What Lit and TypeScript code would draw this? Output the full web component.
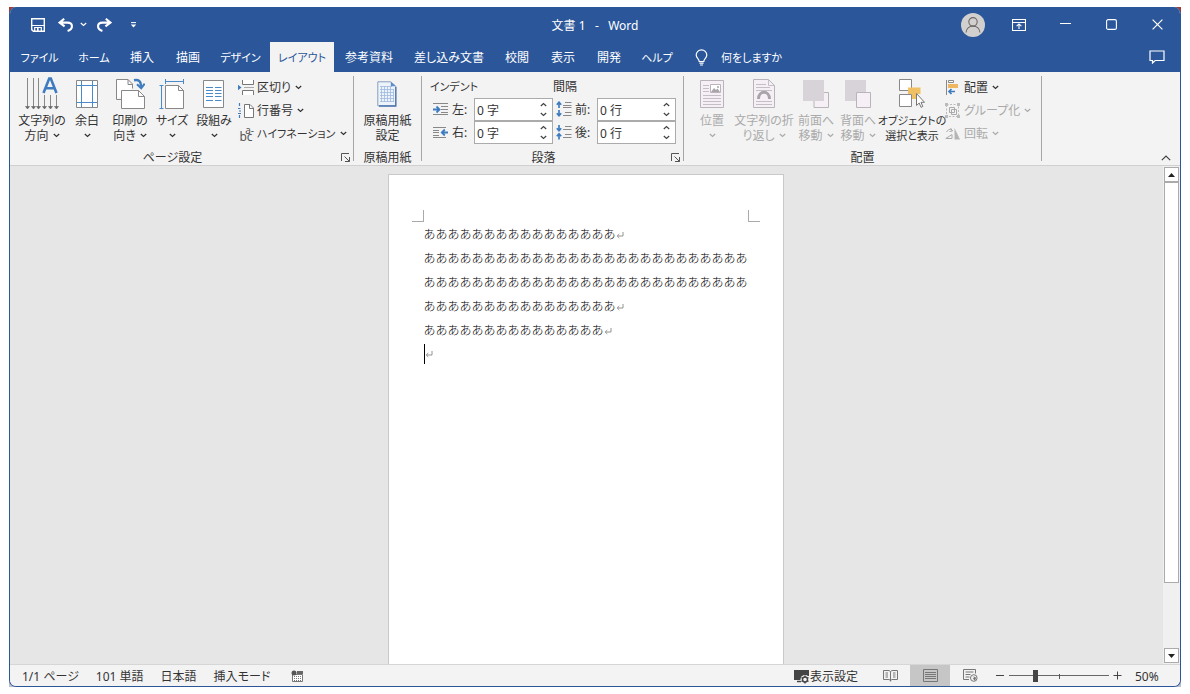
import { LitElement, html, css, svg, nothing, TemplateResult } from "lit";
import { customElement, property } from "lit/decorators.js";
import { classMap } from "lit/directives/class-map.js";

type Icon = TemplateResult;

const icon = (w: number, h: number, body: unknown): Icon =>
  html`<svg width=${w} height=${h} viewBox="0 0 ${w} ${h}" fill="none" aria-hidden="true">${body}</svg>`;

const chevron = () => html`<svg width="7" height="5" viewBox="0 0 7 5" fill="none" aria-hidden="true">
  <path d="M.8 1l2.700 2.500L6.200 1" stroke="currentColor" stroke-width="1.200" />
</svg>`;

const icons = {
  save: icon(14, 14, svg`<path d="M.7.7h12.6v12.6H2.4L.7 11.6z" stroke="#fff" stroke-width="1.4"/><path d="M1 7.500h12M3.700 13V9.500h6.600V13" stroke="#fff" stroke-width="1.200"/><path d="M6 10h1.600v3H6z" fill="#fff"/>`),
  undo: icon(16, 14, svg`<path d="M6.2.8L1.6 4.6l5 3.8M2 4.6h7.4c6 0 6 6.500.2 8.300" stroke="#fff" stroke-width="2.100"/>`),
  redo: icon(16, 14, svg`<path d="M9.800.8l4.600 3.800-5 3.800M14 4.600H6.600c-6 0-6 6.500-.2 8.300" stroke="#fff" stroke-width="2.100"/>`),
  customize: icon(7, 6, svg`<path d="M1 .6h5" stroke="#fff"/><path d="M.8 2.500h5.400L3.500 5.500z" fill="#fff"/>`),
  avatar: icon(24, 24, svg`<circle cx="12" cy="12" r="12" fill="#d2d0ce"/><circle cx="12" cy="8.800" r="4.200" stroke="#6a6866" stroke-width="1.100"/><path d="M5 19.500c.8-8.500 13.200-8.500 14 0" stroke="#6a6866" stroke-width="1.100"/>`),
  ribbonMode: icon(14, 12, svg`<path d="M.5.5h13v11H.5zM.5 3.500h13" stroke="#fff" stroke-width="1.100"/><path d="M7 10V5M4.600 7.200L7 4.900l2.400 2.300" stroke="#fff" stroke-width="1.100"/>`),
  minimize: icon(11, 11, svg`<path d="M0 4.500h11" stroke="#fff"/>`),
  maximize: icon(11, 11, svg`<rect x=".6" y=".6" width="9.800" height="9.800" rx="1.500" stroke="#fff" stroke-width="1.100"/>`),
  close: icon(11, 11, svg`<path d="M.6.6l9.800 9.800M10.400.6L.6 10.400" stroke="#fff" stroke-width="1.200"/>`),
  bulb: icon(13, 17, svg`<path d="M4.200 12.500c0-2.500-3-3.200-3-6.400a5.300 5.300 0 0 1 10.600 0c0 3.200-3 3.900-3 6.400zM4.400 14.200h4.200M5 16h3" stroke="#fff" stroke-width="1.200"/>`),
  comment: icon(16, 14, svg`<path d="M1 1h14v9.500H6.200L3.500 13v-2.500H1z" stroke="#fff" stroke-width="1.200"/>`),
  textDirection: icon(34, 34, svg`<path d="M2.500 1v30M8.500 1v30M13.500 1v30M19.500 18v13M25.500 18v13M31.500 18v13" stroke="#888"/><path d="M.5 29.500h4L2.500 32zM6.500 29.500h4l-2 2.500zM11.500 29.500h4l-2 2.500zM17.500 29.500h4l-2 2.500zM23.500 29.500h4l-2 2.500zM29.500 29.500h4l-2 2.500z" fill="#666" stroke="#666" stroke-width=".6"/><path d="M18.500 16L24.200 1.500h1.600L31.500 16M20.700 11.200h8.700" stroke="#3f7cbf" stroke-width="2.600"/>`),
  margins: icon(22, 28, svg`<path d="M.5.5h21v27H.5z" fill="#fff" stroke="#888"/><path d="M5.500 1v26M16.500 1v26M1 5.500h20M1 22.500h20" stroke="#4a8ac8"/>`),
  orientation: icon(30, 32, svg`<path d="M1.500 21.500v-20H13l4.500 4.500v4.500M13 1.500v5h4.500M1.500 21.500H6" fill="#fff" stroke="#888"/><path d="M6.500 12.500h17l6 6v12h-23z" fill="#fff" stroke="#888"/><path d="M23.500 12.500v6h6" stroke="#888"/><path d="M19 2.300c5-1 7 1 7 6.500" stroke="#3f7cbf" stroke-width="2.400"/><path d="M22 6.200l4.200 4 3.500-4.500" stroke="#3f7cbf" stroke-width="2"/>`),
  size: icon(26, 30, svg`<path d="M6.500 6.500h13l5 5v18h-18z" fill="#fff" stroke="#888"/><path d="M19.500 6.500v5h5" stroke="#888"/><path d="M6 2.500h19M6.500 0v5M24.500 0v5M2.500 6.500v23M.5 6.500h4M.5 29.500h4" stroke="#4a8ac8"/>`),
  columns: icon(22, 28, svg`<path d="M.5.5h20v27H.5z" fill="#fff" stroke="#888"/><path d="M3 7.500h7M3 10.500h7M3 13.500h7M3 16.500h7M3 20.500h7M12 7.500h6.500M12 10.500h6.500M12 13.500h6.500M12 16.500h6.500M12 20.500h6.500" stroke="#4a8ac8"/>`),
  breaks: icon(17, 15, svg`<path d="M4.500 0v4.500h11V0M4.500 15v-4.500h11V15" fill="#fff" stroke="#777"/><path d="M6 7.500h10" stroke="#aaa"/><path d="M0 4.700l3.500 2.800L0 10.200z" fill="#3f7cbf"/>`),
  lineNumbers: icon(17, 15, svg`<path d="M6.500 1.500H12l3.500 3.500v9.500h-9z" fill="#fff" stroke="#777"/><path d="M11.500 1.500v4h4" stroke="#777"/><path d="M1.500 0v3M0 5.500h2.500M1 8h2M0 10.500h3M1.500 12v3" stroke="#3f7cbf" stroke-width="1.200"/>`),
  manuscript: icon(20, 26, svg`<path d="M.8.8h13l5 4.500v19.500H.8z" fill="#edf3fb" stroke="#8a9dbb"/><path d="M3 5.500h12M3 8.500h14M3 11.500h14M3 14.500h14M3 17.500h14M3 20.500h14M4.500 5v16M7.500 5v16M10.500 5v16M13.500 5v16M16.500 8v13" stroke="#9db9df" stroke-width=".8"/><path d="M13.800.8v4.500h5z" fill="#5f8bcb"/><path d="M18.800 6v19H2" stroke="#4b74ae" stroke-width="1.300"/>`),
  launcher: icon(9, 9, svg`<path d="M.5 8V.5H8M8.500 4v4.500H4M3.500 3.500l5 5" stroke="#555"/>`),
  indentLeft: icon(15, 13, svg`<path d="M0 .5h15M0 11.500h15M8 3.500h7M8 6.500h7M8 9.500h7" stroke="#888"/><path d="M0 6.500h6M3.500 3.500l3 3-3 3" stroke="#3f7cbf" stroke-width="1.800"/>`),
  indentRight: icon(15, 13, svg`<path d="M0 1.500h13M0 11.500h13M0 4.500h6M0 6.500h6M0 9.500h6" stroke="#888"/><path d="M9 6.500h6M11.800 3.500l-3 3 3 3" stroke="#3f7cbf" stroke-width="1.800"/>`),
  spaceBefore: icon(16, 17, svg`<path d="M9 1.500h6.500M7 4.500h8.500M7 6.500h8.500M9 11.500h6.500M7 14.500h8.500" stroke="#888"/><path d="M3 1.500v5.500M.8 3.700L3 1.200l2.200 2.500M3 9v5.500M.8 12.300L3 14.800l2.200-2.500" stroke="#3f7cbf" stroke-width="1.700"/>`),
  spaceAfter: icon(16, 17, svg`<path d="M9 2.500h6.500M7 5.500h8.500M9 10.500h6.500M7 13.500h8.500" stroke="#888"/><path d="M3 1v5.500M.8 4.300L3 6.800l2.200-2.500M3 10v5.500M.8 12.200L3 9.700l2.200 2.500" stroke="#3f7cbf" stroke-width="1.700"/>`),
  position: icon(24, 28, svg`<path d="M.5.5h23v27H.5z" fill="#f6f0f6" stroke="#b9b4b9"/><path d="M3 5.500h6M3 8.500h6M3 11.500h6M3 15.500h18M3 18.500h18M3 21.500h18M3 24.500h18" stroke="#c4bfc4"/><path d="M10.500 4.500h10v8h-10z" fill="#fff" stroke="#b9b4b9"/><path d="M11 12l3-4 2 2 1.500-1.500L20 12z" fill="#a9a4a9"/><circle cx="18" cy="7" r="1" fill="#a9a4a9"/>`),
  wrap: icon(22, 30, svg`<path d="M.5.5h15l6 6v22H.5z" fill="#f6f0f6" stroke="#b9b4b9"/><path d="M15.500.5v6h6M3 5.500h10M3 8.500h14M3 11.500h16M3 22.500h16M3 25.500h16" stroke="#c4bfc4"/><path d="M5.500 20c0-9 11-9 11 0" stroke="#a9a4a9" stroke-width="3"/>`),
  forward: icon(26, 28, svg`<path d="M11 12.500h14.500v15H11z" fill="#f6f0f6" stroke="#b9b4b9"/><path d="M0 0h21v21H0z" fill="#d8d3d8"/>`),
  backward: icon(26, 28, svg`<path d="M0 0h21v21H0z" fill="#d8d3d8"/><path d="M11.500 12.500h14v15h-14z" fill="#f6f0f6" stroke="#b9b4b9"/>`),
  selection: icon(26, 30, svg`<path d="M.5.500h12v11H.5zM.5 15.500h12v12H.5z" fill="#fff" stroke="#888"/><path d="M9 8.500h12.500v6.500H9z" fill="#f0c065"/><path d="M13 14h5v6h-5z" fill="#f0c065"/><path d="M17.500 14.500v12l2.700-2.500 1.800 4.300 1.800-.8-1.800-4.200h3.500z" fill="#fff" stroke="#777"/>`),
  align: icon(14, 15, svg`<path d="M1.500 0v15" stroke="#888"/><path d="M3.500.5h5v2h-5z" fill="#fff" stroke="#888"/><path d="M3 4h10v4H3z" fill="#f0b763"/><path d="M4 11.500h6M6.500 9L4 11.500 6.500 14" stroke="#3f7cbf" stroke-width="1.700"/>`),
  group: icon(15, 15, svg`<path d="M1.500 1.500h12v12h-12z" stroke="#bbb" stroke-dasharray="2 1.500"/><path d="M4.500 4.500h5v5h-5zM6.500 6.500h5v5h-5z" stroke="#aaa"/><path d="M0 0h3v3H0zM12 0h3v3h-3zM0 12h3v3H0zM12 12h3v3h-3z" fill="#bbb"/>`),
  rotate: icon(16, 13, svg`<path d="M.8 11.500L7 7.500v4zM1.500 5c2-3.500 5-3 6-1M5.500 1l2 3-3 .5" stroke="#aaa"/><path d="M9.500 1v11.500H15z" fill="#b5b5b5"/>`),
  collapse: icon(10, 6, svg`<path d="M.8 5.200L5 1l4.200 4.200" stroke="#444" stroke-width="1.200"/>`),
  macro: icon(13, 13, svg`<path d="M1.500 4.500h10v7h-10z" fill="#fff" stroke="#777"/><path d="M6 1h6v3H6z" fill="#666"/><path d="M3 6.500h8M3 8.500h8M3 10.500h8" stroke="#777" stroke-dasharray="1 1"/><circle cx="3" cy="3" r="2.500" fill="#555"/>`),
  display: icon(16, 15, svg`<path d="M0 1h15v6H9.500L7 11H0z" fill="#444"/><path d="M3 12.500h4" stroke="#444" stroke-width="1.500"/><circle cx="11" cy="10.500" r="4.500" fill="#f3f3f3"/><circle cx="11" cy="10.500" r="2.500" stroke="#444" stroke-width="1.400"/><path d="M11 6.500v1.500M11 13v1.500M7.500 8.500l1.300.8M13.200 11.700l1.300.8M7.500 12.500l1.300-.8M13.200 9.300l1.300-.8" stroke="#444" stroke-width="1.400"/>`),
  read: icon(15, 12, svg`<path d="M7.500 1.500v10M.5.500h5.500l1.500 1L9 .5h5.500v9H9l-1.500 1-1.500-1H.5z" stroke="#777"/><path d="M2.500 3H5M2.500 5H5M2.500 7H5M10 3h2.500M10 5h2.500M10 7h2.500" stroke="#777"/>`),
  print: icon(15, 13, svg`<path d="M.5.500h14v12H.5z" stroke="#777"/><path d="M2 3.500h11M2 5.500h11M2 7.500h11M2 9.500h11" stroke="#777"/>`),
  web: icon(15, 13, svg`<path d="M6 10.500H.5V.5h12v4" stroke="#777"/><path d="M2.500 3h8M2.500 5.500h5M2.500 8h4" stroke="#777"/><circle cx="10.800" cy="9" r="3.300" fill="#f3f3f3" stroke="#777"/><path d="M9 7l2.500.5L10 9.500l1.500 2c1-.5 1.500-2 1.500-3z" fill="#777"/>`),
  mark: icon(8, 8, svg`<path d="M7 1v4H1.500M3.300 3L1.200 5l2.100 2" stroke="#888" stroke-width=".9"/>`),
};

const controlReset = css`
  *, *::before, *::after { box-sizing: border-box; }
  svg { flex: none; }
  button, input {
    font: inherit;
    font-feature-settings: inherit;
    color: inherit;
    background: none;
    border: 0;
    padding: 0;
    margin: 0;
  }
`;

@customElement("big-button")
class BigButton extends LitElement {
  @property({ attribute: false }) glyph: unknown;
  @property({ attribute: false }) lines: string[] = [];
  @property({ type: Boolean }) arrow = false;
  @property({ type: Boolean }) off = false;

  static styles = [controlReset, css`
    :host { display: block; }
    .big {
      width: 100%;
      display: flex;
      flex-direction: column;
      align-items: center;
      line-height: 15px;
      white-space: nowrap;
    }
    .pic { height: 37px; padding-bottom: 1px; display: flex; align-items: center; }
    .big:disabled { color: #aaa; }
    .row { height: 15px; display: flex; align-items: center; gap: 4px; }
  `];

  render() {
    const [first, second] = this.lines;
    return html`<button class="big" ?disabled=${this.off}>
      <span class="pic">${this.glyph}</span>
      <span class="row">${first}</span>
      <span class="row">${second ?? nothing}${this.arrow ? chevron() : nothing}</span>
    </button>`;
  }
}

@customElement("small-button")
class SmallButton extends LitElement {
  @property({ attribute: false }) glyph: unknown;
  @property() label = "";
  @property({ type: Boolean }) off = false;

  static styles = [controlReset, css`
    :host { display: block; }
    .small {
      height: 23px;
      display: flex;
      align-items: center;
      white-space: nowrap;
      line-height: 16px;
    }
    .small:disabled { color: #aaa; }
    .pic { width: 19px; display: flex; flex: none; }
    .text { margin-right: 4px; }
  `];

  render() {
    return html`<button class="small" ?disabled=${this.off}>
      <span class="pic">${this.glyph ?? html`<slot></slot>`}</span><span class="text">${this.label}</span>${chevron()}
    </button>`;
  }
}

@customElement("spin-field")
class SpinField extends LitElement {
  @property({ attribute: false }) glyph: unknown;
  @property() label = "";
  @property() value = "";

  static styles = [controlReset, css`
    :host { display: flex; align-items: center; height: 23px; }
    .pic { width: 19px; display: flex; justify-content: flex-start; }
    .label { width: 22px; line-height: 16px; white-space: nowrap; }
    .box {
      display: flex;
      width: 79px;
      height: 23px;
      border: 1px solid #ababab;
      background: #fff;
    }
    .value { flex: 1; min-width: 0; padding-left: 2px; outline: 0; }
    .steps { width: 17px; display: flex; flex-direction: column; }
    .step { flex: 1; display: flex; align-items: center; justify-content: center; color: #444; }
    .up svg { transform: rotate(180deg); }
  `];

  render() {
    return html`
      <span class="pic">${this.glyph}</span>
      <label class="label" for="v">${this.label}</label>
      <span class="box">
        <input class="value" id="v" type="text" .value=${this.value} />
        <span class="steps">
          <button class="step up" aria-label="+">${chevron()}</button>
          <button class="step" aria-label="-">${chevron()}</button>
        </span>
      </span>`;
  }
}

const tabs: [string, string][] = [
  ["ファイル", "t59 kana"], ["ホーム", "t50 kana"], ["挿入", "t46"], ["描画", "t46"], ["デザイン", "t59 kana"],
  ["レイアウト", "t64 kana active"], ["参考資料", "t70"], ["差し込み文書", "t88"], ["校閲", "t46"],
  ["表示", "t46"], ["開発", "t46"], ["ヘルプ", "t50 kana"],
];

const paragraphs = [16, 70, 15, 0];

@customElement("app-root")
class AppRoot extends LitElement {
  static styles = [controlReset, css`
    :host {
      display: flex;
      height: 100vh;
      padding: 7px 9px;
      box-sizing: border-box;
      background: #fff;
      font-family: "Noto Sans", "Noto Sans CJK JP", sans-serif;
      font-size: 12px;
      font-feature-settings: "palt";
      color: #333;
    }
    .desk {
      flex: 1;
      min-width: 0;
      display: flex;
      background: linear-gradient(#a33b35 50%, #b9c0cf 50%);
    }
    .window {
      flex: 1;
      min-width: 0;
      display: flex;
      flex-direction: column;
      border: 1px solid #2b579a;
      border-top: 0;
      border-radius: 7px;
      overflow: hidden;
      background: #e6e6e6;
    }
    .kana { font-size: 11px; }

    .title {
      height: 35px;
      flex: none;
      display: grid;
      grid-template-columns: 1fr auto 1fr;
      align-items: center;
      background: #2b579a;
      color: #fff;
    }
    .quick { display: flex; align-items: center; padding-left: 21px; }
    .quick button { display: flex; }
    .undo { margin-left: 13px; }
    .more { margin-left: 6px; }
    .redo { margin-left: 9px; }
    .custom { margin-left: 18px; }
    .name { white-space: pre; font-size: 12px; line-height: 16px; font-weight: 400; margin: 0; padding-top: 2px; }
    .controls { display: flex; justify-content: flex-end; align-items: center; }
    .controls button { width: 46px; height: 32px; display: flex; align-items: center; justify-content: center; }

    .tabs {
      height: 30px;
      flex: none;
      display: flex;
      align-items: stretch;
      background: #2b579a;
      color: #fff;
    }
    .tab { text-align: center; white-space: nowrap; }
    .t46 { width: 46px; } .t50 { width: 50px; } .t59 { width: 59px; }
    .t64 { width: 64px; } .t70 { width: 70px; } .t88 { width: 90px; }
    .active { background: #f3f3f3; color: #2b579a; }
    .ask { display: flex; align-items: center; gap: 12px; padding-left: 13px; }
    .ask .kana { padding-left: 1px; }
    .talk { margin-left: auto; padding-right: 15px; display: flex; align-items: center; }

    .ribbon {
      height: 94px;
      flex: none;
      display: flex;
      background: #f3f3f3;
      border-bottom: 1px solid #d0d0d0;
      padding: 4px 0;
    }
    .set {
      display: grid;
      grid-template-rows: 1fr 9px;
      border-right: 1px solid #a6a6a6;
    }
    .items { display: flex; min-width: 0; }
    .foot { display: grid; grid-template-columns: 12px 1fr 12px; align-items: center; line-height: 9px; }
    .caption { text-align: center; grid-column: 2; white-space: nowrap; padding-top: 1px; }
    .foot button { display: flex; }
    .setup { width: 344px; }
    .setup .caption { padding-right: 18px; }
    .setup .items { padding-left: 9px; }
    .setup .stack { padding-left: 3px; }
    .genko { width: 68px; }
    .genko .items { justify-content: center; }
    .genko .foot { grid-template-columns: 0 1fr 0; }
    .para { width: 262px; }
    .para .caption { padding-right: 18px; }
    .arrange { width: 358px; }
    .arrange .items { padding-left: 7px; }
    .w42 { width: 42px; } .w44 { width: 44px; } .w46 { width: 46px; } .w62 { width: 62px; } .w66 { width: 66px; }
    .hyph { width: 16px; display: flex; flex-direction: column; line-height: 8px; font-size: 12px; color: #555; }
    .hyph .top { font-size: 10px; line-height: 6px; text-align: right; }
    .field-grid {
      display: grid;
      grid-template-columns: 120px 120px;
      grid-template-rows: 22px 23px 23px;
      column-gap: 3px;
      padding-left: 11px;
      align-content: start;
    }
    .head { line-height: 22px; margin-left: -3px; }
    .fold { margin-left: auto; padding-right: 9px; display: flex; align-items: flex-end; }

    .body { flex: 1; min-height: 0; display: flex; }
    .canvas { flex: 1; min-width: 0; display: flex; justify-content: center; padding: 8px 2px 0 0; }
    .page {
      width: 396px;
      background: #fff;
      border: 1px solid #c9c9c9;
      border-bottom: 0;
      padding: 35px 35px 0;
      outline: 0;
    }
    .crops { display: flex; justify-content: space-between; margin: 0 -12px; height: 12px; }
    .crop { width: 12px; border-bottom: 1px solid #aaa; }
    .crop.l { border-right: 1px solid #aaa; }
    .crop.r { border-left: 1px solid #aaa; }
    .text {
      margin: 0;
      line-height: 24px;
      font-family: "Noto Sans CJK JP", sans-serif;
      font-feature-settings: normal;
      font-weight: 300;
      color: #000;
      word-break: break-all;
    }
    .text.last { display: flex; align-items: center; height: 24px; }
    .caret { width: 1px; height: 20px; background: #000; }

    .scroll { width: 17px; flex: none; display: flex; flex-direction: column; background: #f0f0f0; padding: 1px 1px 1px; }
    .arrow {
      height: 15px;
      flex: none;
      display: flex;
      align-items: center;
      justify-content: center;
      border: 1px solid #ababab;
      background: #fff;
    }
    .track { flex: 1; display: flex; flex-direction: column; }
    .thumb { flex: 402; background: #fff; border: 1px solid #ababab; }
    .rest { flex: 65; }

    .status {
      height: 22px;
      flex: none;
      display: flex;
      align-items: center;
      background: #f3f3f3;
      border-top: 1px solid #d6d6d6;
      padding-left: 12px;
      line-height: 20px;
      white-space: nowrap;
    }
    .info { display: flex; align-items: center; gap: 17px; padding-top: 2px; }
    .rec { display: flex; padding-left: 4px; }
    .tools { margin-left: auto; display: flex; align-items: center; align-self: stretch; }
    .tools button { display: flex; align-items: center; justify-content: center; }
    .view { width: 40px; align-self: stretch; }
    .view.on { background: #c6c6c6; }
    .settings { margin-right: 12px; }
    .tools .settings, .tools .percent { padding-top: 2px; }
    .zoomer { width: 100px; position: relative; display: flex; align-items: center; margin: 0 4px; }
    .zoomer::after { content: ""; position: absolute; left: 50px; top: 50%; width: 1px; height: 5px; margin-top: -2px; background: #555; }
    .range { -webkit-appearance: none; appearance: none; width: 100%; height: 12px; }
    .range::-webkit-slider-runnable-track { height: 12px; background: linear-gradient(#666, #666) center / 100% 1px no-repeat; }
    .range::-webkit-slider-thumb { -webkit-appearance: none; width: 5px; height: 12px; background: #444; }
    .tools .percent { width: 58px; padding-left: 13px; justify-content: flex-start; }
  `];

  private renderTabs() {
    return html`<nav class="tabs">
      ${tabs.map(([name, cls]) => html`<button class="tab ${cls}">${name}</button>`)}
      <button class="ask">${icons.bulb}<span class="kana">何をしますか</span></button>
      <button class="talk" aria-label="コメント">${icons.comment}</button>
    </nav>`;
  }

  private renderRibbon() {
    return html`<section class="ribbon">
      <div class="set setup">
        <div class="items">
          <big-button class="w46" .glyph=${icons.textDirection} .lines=${["文字列の", "方向"]} arrow></big-button>
          <big-button class="w44" .glyph=${icons.margins} .lines=${["余白"]} arrow></big-button>
          <big-button class="w42" .glyph=${icons.orientation} .lines=${["印刷の", "向き"]} arrow></big-button>
          <big-button class="w42" .glyph=${icons.size} .lines=${["サイズ"]} arrow></big-button>
          <big-button class="w42" .glyph=${icons.columns} .lines=${["段組み"]} arrow></big-button>
          <div class="stack">
            <small-button .glyph=${icons.breaks} label="区切り"></small-button>
            <small-button .glyph=${icons.lineNumbers} label="行番号"></small-button>
            <small-button class="kana" label="ハイフネーション"><span class="hyph"><span class="top">a-</span><span>bc</span></span></small-button>
          </div>
        </div>
        <div class="foot"><span class="caption">ページ設定</span><button aria-label="ページ設定">${icons.launcher}</button></div>
      </div>
      <div class="set genko">
        <div class="items"><big-button .glyph=${icons.manuscript} .lines=${["原稿用紙", "設定"]}></big-button></div>
        <div class="foot"><span class="caption">原稿用紙</span></div>
      </div>
      <div class="set para">
        <div class="field-grid">
          <span class="head kana">インデント</span><span class="head">間隔</span>
          <spin-field .glyph=${icons.indentLeft} label="左:" value="0 字"></spin-field>
          <spin-field .glyph=${icons.spaceBefore} label="前:" value="0 行"></spin-field>
          <spin-field .glyph=${icons.indentRight} label="右:" value="0 字"></spin-field>
          <spin-field .glyph=${icons.spaceAfter} label="後:" value="0 行"></spin-field>
        </div>
        <div class="foot"><span class="caption">段落</span><button aria-label="段落">${icons.launcher}</button></div>
      </div>
      <div class="set arrange">
        <div class="items">
          <big-button class="w42" .glyph=${icons.position} .lines=${["位置"]} arrow off></big-button>
          <big-button class="w62" .glyph=${icons.wrap} .lines=${["文字列の折", "り返し"]} arrow off></big-button>
          <big-button class="w42" .glyph=${icons.forward} .lines=${["前面へ", "移動"]} arrow off></big-button>
          <big-button class="w42" .glyph=${icons.backward} .lines=${["背面へ", "移動"]} arrow off></big-button>
          <big-button class="w66 kana" .glyph=${icons.selection} .lines=${["オブジェクトの", "選択と表示"]}></big-button>
          <div class="stack">
            <small-button .glyph=${icons.align} label="配置"></small-button>
            <small-button .glyph=${icons.group} label="グループ化" off></small-button>
            <small-button .glyph=${icons.rotate} label="回転" off></small-button>
          </div>
        </div>
        <div class="foot"><span class="caption">配置</span></div>
      </div>
      <button class="fold" aria-label="リボンを折りたたむ">${icons.collapse}</button>
    </section>`;
  }

  private renderPage() {
    return html`<article class="page">
      <div class="crops"><span class="crop l"></span><span class="crop r"></span></div>
      ${paragraphs.map((n) => html`<p class=${classMap({ text: true, last: n === 0 })}>${n === 0 ? html`<span class="caret"></span>` : "あ".repeat(n)}${icons.mark}</p>`)}
    </article>`;
  }

  render() {
    return html`<div class="desk"><div class="window">
      <header class="title">
        <div class="quick">
          <button aria-label="保存">${icons.save}</button>
          <button class="undo" aria-label="元に戻す">${icons.undo}</button>
          <button class="more" aria-label="履歴">${chevron()}</button>
          <button class="redo" aria-label="やり直し">${icons.redo}</button>
          <button class="custom" aria-label="カスタマイズ">${icons.customize}</button>
        </div>
        <h1 class="name">文書 1   -   Word</h1>
        <div class="controls">
          <button aria-label="アカウント">${icons.avatar}</button>
          <button aria-label="リボンの表示">${icons.ribbonMode}</button>
          <button aria-label="最小化">${icons.minimize}</button>
          <button aria-label="最大化">${icons.maximize}</button>
          <button aria-label="閉じる">${icons.close}</button>
        </div>
      </header>
      ${this.renderTabs()}
      ${this.renderRibbon()}
      <main class="body">
        <div class="canvas">${this.renderPage()}</div>
        <div class="scroll">
          <button class="arrow" aria-label="上へ">${icon(7, 4, svg`<path d="M0 4h7L3.500 0z" fill="#222"/>`)}</button>
          <div class="track"><div class="thumb"></div><div class="rest"></div></div>
          <button class="arrow" aria-label="下へ">${icon(7, 4, svg`<path d="M0 0h7L3.500 4z" fill="#222"/>`)}</button>
        </div>
      </main>
      <footer class="status">
        <div class="info">
          <span>1/1 ページ</span><span>101 単語</span><span>日本語</span><span>挿入モード</span>
          <span class="rec">${icons.macro}</span>
        </div>
        <div class="tools">
          <button class="settings">${icons.display}<span>表示設定</span></button>
          <button class="view" aria-label="閲覧モード">${icons.read}</button>
          <button class="view on" aria-label="印刷レイアウト">${icons.print}</button>
          <button class="view" aria-label="Web レイアウト">${icons.web}</button>
          <button aria-label="縮小">${icon(15, 9, svg`<path d="M6 4.500h8" stroke="#444"/>`)}</button>
          <span class="zoomer"><input class="range" type="range" min="0" max="200" value="50" aria-label="ズーム" /></span>
          <button aria-label="拡大">${icon(9, 9, svg`<path d="M.5 4.500h8M4.500.5v8" stroke="#444"/>`)}</button>
          <button class="percent">50%</button>
        </div>
      </footer>
    </div></div>`;
  }
}
